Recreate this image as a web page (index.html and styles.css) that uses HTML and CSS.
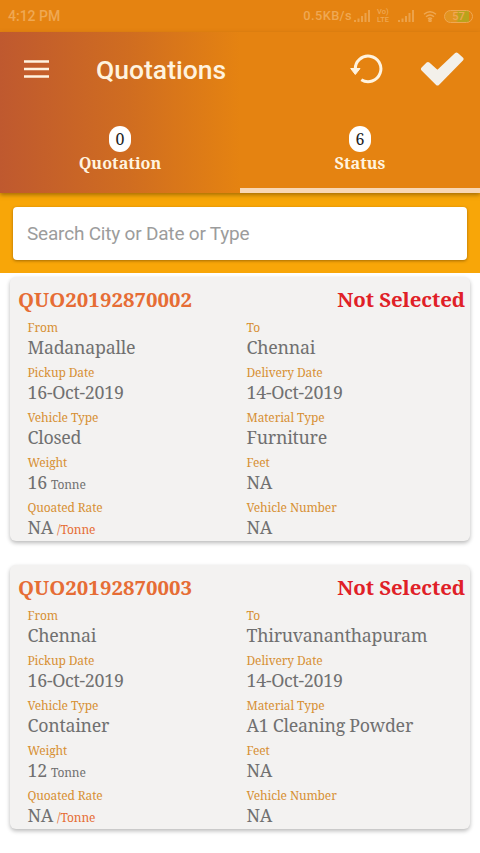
FILE: index.html
```html
<!DOCTYPE html>
<html lang="en">
<head>
<meta charset="utf-8">
<meta name="viewport" content="width=device-width, initial-scale=1">
<title>Quotations</title>
<link rel="stylesheet" href="styles.css">
</head>
<body>
<div class="status-bar">
  <span class="time">4:12 PM</span>
  <div class="indicators">
    <span class="speed">0.5KB/s</span>
    <svg class="signal" width="17" height="14" viewBox="0 0 17 14"><path d="M1 11v2M4.500 9.500v3.500M8 7v6M11.500 4v9M15 1v12"/></svg>
    <span class="volte"><span>Vo)</span><span>LTE</span></span>
    <svg class="signal second" width="17" height="14" viewBox="0 0 17 14"><path d="M1 11v2M4.500 9.500v3.500M8 7v6M11.500 4v9M15 1v12"/></svg>
    <svg class="wifi" width="14" height="12" viewBox="0 0 14 12"><path d="M1 4.300Q7-1 13 4.300M3 6.800Q7 3 11 6.800M5 9Q7 7 9 9"/><circle cx="7" cy="10.600" r="1.100"/></svg>
    <span class="battery">57</span>
  </div>
</div>
<header class="header">
  <div class="toolbar">
    <svg class="menu" width="26" height="18" viewBox="0 0 26 18"><path d="M1 1.500h25M1 9h25M1 16.500h25"/></svg>
    <h1>Quotations</h1>
    <svg class="refresh" width="34" height="32" viewBox="0 0 34 32"><path class="arc" d="M6.300 16.500A12.800 12.800 0 1 1 12.300 26.700"/><path class="head" d="M1.700 15.500H11L6.300 21.500Z"/></svg>
    <svg class="check" width="44" height="34" viewBox="0 0 44 34"><path d="M3 17 L17.500 31.500 L41.500 7 L36.500 2.500 L17.500 20.500 L8 12 Z"/></svg>
  </div>
  <nav class="tabs">
    <div class="tab"><span class="count">0</span><span class="tab-name">Quotation</span></div>
    <div class="tab active"><span class="count">6</span><span class="tab-name">Status</span></div>
  </nav>
</header>
<div class="search"><div class="field">Search City or Date or Type</div></div>
<main class="list">
  <article class="card">
    <div class="card-head"><span class="number">QUO20192870002</span><span class="state">Not Selected</span></div>
    <dl class="details">
      <div><dt>From</dt><dd>Madanapalle</dd></div>
      <div><dt>To</dt><dd>Chennai</dd></div>
      <div><dt>Pickup Date</dt><dd>16-Oct-2019</dd></div>
      <div><dt>Delivery Date</dt><dd>14-Oct-2019</dd></div>
      <div><dt>Vehicle Type</dt><dd>Closed</dd></div>
      <div><dt>Material Type</dt><dd>Furniture</dd></div>
      <div><dt>Weight</dt><dd>16<small>Tonne</small></dd></div>
      <div><dt>Feet</dt><dd>NA</dd></div>
      <div><dt>Quoated Rate</dt><dd>NA<small class="rate">/Tonne</small></dd></div>
      <div><dt>Vehicle Number</dt><dd>NA</dd></div>
    </dl>
  </article>
  <article class="card">
    <div class="card-head"><span class="number">QUO20192870003</span><span class="state">Not Selected</span></div>
    <dl class="details">
      <div><dt>From</dt><dd>Chennai</dd></div>
      <div><dt>To</dt><dd>Thiruvananthapuram</dd></div>
      <div><dt>Pickup Date</dt><dd>16-Oct-2019</dd></div>
      <div><dt>Delivery Date</dt><dd>14-Oct-2019</dd></div>
      <div><dt>Vehicle Type</dt><dd>Container</dd></div>
      <div><dt>Material Type</dt><dd>A1 Cleaning Powder</dd></div>
      <div><dt>Weight</dt><dd>12<small>Tonne</small></dd></div>
      <div><dt>Feet</dt><dd>NA</dd></div>
      <div><dt>Quoated Rate</dt><dd>NA<small class="rate">/Tonne</small></dd></div>
      <div><dt>Vehicle Number</dt><dd>NA</dd></div>
    </dl>
  </article>
</main>
</body>
</html>
```
FILE: styles.css
```css
* { box-sizing: border-box; }
body {
  margin: 0;
  height: 853px;
  overflow: hidden;
  background: #fff;
  font-family: "Noto Serif", "DejaVu Serif Condensed", "DejaVu Serif", serif;
}
svg { display: block; flex: none; fill: none; }
.status-bar {
  height: 32px;
  padding: 0 7px 0 8px;
  display: flex;
  align-items: center;
  justify-content: space-between;
  background: #e58311;
  color: #efa853;
  font: 500 14px/32px Roboto, sans-serif;
}
.indicators { display: flex; align-items: center; }
.speed { font-size: 12.8px; letter-spacing: .4px; margin-right: 2px; }
.signal { stroke: #eca24a; stroke-width: 2; }
.volte { display: flex; flex-direction: column; margin: 0 7px 0 6px; font-size: 7.500px; line-height: 8px; width: 14px; }
.wifi { stroke: #efa853; stroke-width: 1.400; margin: 0 7px 0 8px; }
.battery {
  width: 29px; height: 13px;
  border: 1.500px solid #efa853;
  border-radius: 7px;
  background: linear-gradient(90deg, #e39420 0 40%, #b9a31c 50% 88%, #e58311 90%);
  font-size: 11px; line-height: 11px; text-align: center;
}
.header {
  position: relative;
  height: 161px;
  background: linear-gradient(90deg, #bf592f 0, #d06d20 130px, #e58311 240px);
  box-shadow: 0 2px 4px rgba(90, 60, 0, .5);
  color: #fff3df;
}
.toolbar { display: flex; align-items: center; height: 75px; padding: 0 16px 2px 23px; }
.menu { stroke: #fff3df; stroke-width: 2.500; }
h1 { margin: 2px auto 0 47px; font: 500 26.5px/32px Roboto, sans-serif; }
.refresh { margin-right: 37.500px; }
.arc { stroke: #fff3df; stroke-width: 3; }
.head { fill: #fff3df; stroke: #fff3df; }
.check path { fill: #f3f0ea; stroke: #f3f0ea; stroke-width: 4; stroke-linejoin: round; }
.tabs { display: flex; height: 86px; }
.tab { flex: 1; display: flex; flex-direction: column; align-items: center; padding-top: 19px; border-bottom: 5px solid transparent; }
.tab.active { border-color: #f8d7b5; }
.count {
  width: 22px; height: 26px;
  border-radius: 11px;
  background: #fff; color: #222;
  font-size: 16px; line-height: 27px; text-align: center;
}
.tab-name { font-size: 16.2px; font-weight: 700; line-height: 23px; }
.search { height: 80px; padding: 14px 13px 13px; background: #f8a608; }
.field {
  height: 53px; padding-left: 14px;
  border-radius: 4px; background: #fff;
  box-shadow: 0 1px 3px rgba(110, 70, 0, .6);
  color: #9c9c9c;
  font: 19px/54px Roboto, sans-serif;
  letter-spacing: -.2px;
}
.list { display: flex; flex-direction: column; gap: 24px; padding: 4px 10px; }
.card {
  height: 264px; padding: 7px 5px 0 8px;
  border-radius: 6px; background: #f3f2f1;
  box-shadow: 0 2px 4px rgba(0, 0, 0, .28);
}
.card-head { display: flex; justify-content: space-between; height: 34px; font-size: 20.400px; font-weight: 700; line-height: 31px; }
.number { color: #e66d35; }
.state { color: #e02027; letter-spacing: -.05px; }
.details { display: grid; grid-template-columns: 219px 1fr; margin: 0 0 0 9.500px; }
.details div { height: 45px; }
dt { color: #d79034; font-size: 12px; line-height: 19px; letter-spacing: -.13px; }
dd { margin: 0; color: #707070; font-size: 17.800px; line-height: 21px; letter-spacing: -.25px; }
dt, dd { white-space: nowrap; }
small { margin-left: 4px; font-size: 12px; letter-spacing: -.15px; line-height: 1; }
.rate { color: #e66d35; }
```
